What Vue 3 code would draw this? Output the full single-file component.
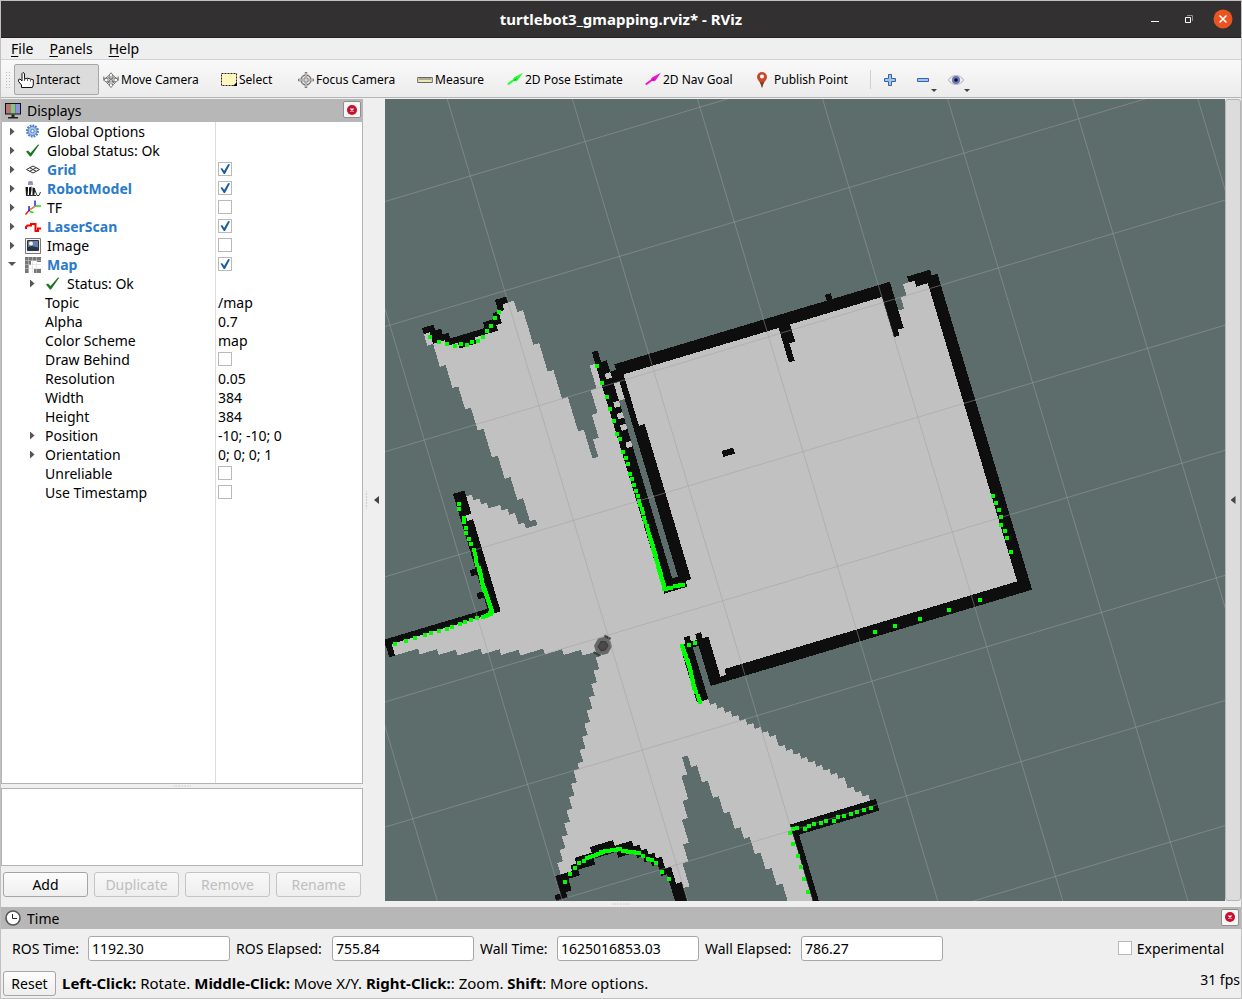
<template>
  <div class="window">
    <header class="titlebar">
      <h1 class="titlebar__title">turtlebot3_gmapping.rviz* - RViz</h1>
      <div class="titlebar__controls">
        <button class="titlebar__button" aria-label="Minimize">
          <svg width="20" height="20" viewBox="0 0 20 20"><path d="M6 12.5h8" stroke="#fff" /></svg>
        </button>
        <button class="titlebar__button" aria-label="Restore">
          <svg width="20" height="20" viewBox="0 0 20 20" fill="none">
            <path d="M8 6.5h5.500v5.500" stroke="#8f8e8e" />
            <path d="M6.500 8.500h5v5h-5z" stroke="#fff" />
          </svg>
        </button>
        <button class="titlebar__button" aria-label="Close">
          <svg width="20" height="20" viewBox="0 0 20 20">
            <circle cx="10" cy="10" r="9.500" fill="#e95420" />
            <path d="M6.500 6.500l7 7M13.500 6.500l-7 7" stroke="#fff" stroke-width="1.600" />
          </svg>
        </button>
      </div>
    </header>

    <nav class="menubar">
      <button v-for="menu in menus" :key="menu" class="menubar__item">
        <span class="menubar__key">{{ menu[0] }}</span>{{ menu.slice(1) }}
      </button>
    </nav>

    <div class="toolbar">
      <span class="toolbar__handle"></span>
      <button
        v-for="tool in tools"
        :key="tool.id"
        :class="['tool', { 'tool--active': tool.id === activeTool }]"
        :style="{ width: tool.width + 'px' }"
        @click="activeTool = tool.id"
      >
        <svg class="tool__icon" width="16" height="16" viewBox="0 0 16 16" fill="none">
          <template v-if="tool.id === 'interact'">
            <path d="M3.500 15.500V13L.6 9.500V7.500l1.400-.5 2 2V1.500l1-1 1.500 1V7l3-.8 3 .8 2.800.8v5.200l-1 2.500z" fill="#fff" stroke="#111" />
            <path d="M6.500 6v3M9.500 6.500V9M12.500 7.500v2" stroke="#333" stroke-width=".8" />
          </template>
          <template v-else-if="tool.id === 'move'">
            <path d="M8 .8l2.500 3H9v3.200h3V5.500L15.500 8 12 10.500V9H9v3.500h1.500L8 15.500l-2.500-3H7V9H4v1.500L.5 8 4 5.500V7h3V3.800H5.500z" fill="#fff" stroke="#555" stroke-width=".8" />
            <path d="M.8 4.500v3l4-3 6.500 6M15.200 4.500v3l-4-3-6.500 6M4 12l2-2M12 12l-2-2" stroke="#666" />
          </template>
          <template v-else-if="tool.id === 'select'">
            <path d="M.5 1.500h15v12H.5z" fill="#fff6bd" stroke="#222" stroke-dasharray="2 1" />
            <path d="M16 10v4h-4z" fill="#000" />
          </template>
          <template v-else-if="tool.id === 'focus'">
            <circle cx="8" cy="8" r="5" stroke="#777" stroke-width="1.300" />
            <circle cx="8" cy="8" r="2.500" stroke="#999" />
            <path d="M8 0v16M0 8h16" stroke="#777" stroke-width="2.400" />
            <path d="M8 1v14M1 8h14" stroke="#eee" />
          </template>
          <template v-else-if="tool.id === 'measure'">
            <path d="M.7 5.500h14.600v5H.7z" fill="#eee8b5" stroke="#666" />
            <path d="M3 6v2M5 6v2M7 6v2M9 6v2M11 6v2M13 6v2" stroke="#555" stroke-width=".8" />
          </template>
          <template v-else-if="tool.id === 'pose' || tool.id === 'goal'">
            <path d="M.8 12.500L8 7" :stroke="tool.color" stroke-width="2" />
            <path d="M16 .8L7 5.500l-1 1.500 3 2.500 1.500-1z" :fill="tool.color" />
            <path d="M7 8.800l2.500-2" stroke="#333" stroke-opacity=".6" />
          </template>
          <template v-else>
            <path d="M6 0a5 5 0 0 0-5 5c0 3.500 4 5 5 11 1-6 5-7.500 5-11a5 5 0 0 0-5-5z" fill="#c8492a" />
            <path d="M4 10l2 6 2-6z" fill="#6c4a20" />
            <circle cx="6" cy="4.500" r="2" fill="#fff" />
          </template>
        </svg>
        <span>{{ tool.label }}</span>
      </button>
      <span class="toolbar__separator"></span>
      <button class="tool-small" aria-label="Add tool">
        <svg width="16" height="16" viewBox="0 0 16 16">
          <path d="M6.500 2.500h3v4h4v3h-4v4h-3v-4h-4v-3h4z" fill="#a5c3e6" stroke="#2f65ac" />
        </svg>
      </button>
      <button class="tool-small" aria-label="Remove tool">
        <svg width="16" height="16" viewBox="0 0 16 16">
          <path d="M2.500 6.500h11v3h-11z" fill="#a5c3e6" stroke="#2f65ac" />
        </svg>
        <span class="tool-small__arrow"></span>
      </button>
      <button class="tool-small" aria-label="Tool visibility">
        <svg width="16" height="16" viewBox="0 0 16 16">
          <path d="M.3 8c3-6 12.400-6 15.400 0-3 6-12.400 6-15.400 0z" fill="#e8e8e8" stroke="#aaa" stroke-width=".8" />
          <circle cx="8" cy="8" r="4" fill="#6a78b5" />
          <circle cx="8" cy="8" r="1.800" fill="#0c0c30" />
        </svg>
        <span class="tool-small__arrow"></span>
      </button>
    </div>

    <main class="workspace">
      <aside class="displays">
        <div class="dock-title">
          <svg width="16" height="16" viewBox="0 0 16 16">
            <path d="M0 0h16v11.500H0z" fill="#111" />
            <path d="M1 1h5v9.500H1z" fill="#b87474" />
            <path d="M6 1h4.500v9.500H6z" fill="#80c880" />
            <path d="M10.500 1H15v9.500h-4.500z" fill="#9090e0" />
            <path d="M6.500 11.500h3v2.500h3.500v1.500H3V14h3.500z" fill="#222" />
          </svg>
          <h2 class="dock-title__label">Displays</h2>
          <button class="dock-title__close" aria-label="Close Displays">
            <svg width="10" height="10" viewBox="0 0 10 10">
              <circle cx="5" cy="5" r="5" fill="#c8102e" />
              <path d="M3.500 3.500l3 3M6.500 3.500l-3 3" stroke="#fff" stroke-width="1.200" />
            </svg>
          </button>
        </div>

        <div class="tree" role="tree">
          <div v-for="row in rows" :key="row.label" class="row" role="treeitem">
            <div :class="['row__name', { 'row__name--child': row.child }]">
              <span :class="['row__arrow', { 'row__arrow--closed': row.arrow === 'closed', 'row__arrow--open': row.arrow === 'open' }]"></span>
              <svg v-if="row.icon" class="row__icon" width="16" height="16" viewBox="0 0 16 16" fill="none">
                <template v-if="row.icon === 'gear'">
                  <circle cx="7.500" cy="7" r="5.500" stroke="#4a7fc0" stroke-width="2" stroke-dasharray="1.800 1" />
                  <circle cx="7.500" cy="7" r="4.500" fill="#a9c6ea" stroke="#4a7fc0" />
                  <circle cx="7.500" cy="7" r="1.700" fill="#fff" stroke="#4a7fc0" />
                </template>
                <template v-else-if="row.icon === 'ok'">
                  <path d="M1 8.500L3 7.500 5.500 10 13 1.500l1.200.2L6 13.500H5z" fill="#1d7420" />
                </template>
                <template v-else-if="row.icon === 'grid'">
                  <path d="M1.500 7.500L8 4l6.500 3.500L8 11zM4.700 5.700l6.500 3.600M11.300 5.700L4.700 9.300" stroke="#333" />
                </template>
                <template v-else-if="row.icon === 'robot'">
                  <path d="M3 1.500h5v2.500H3z" fill="#99a" />
                  <path d="M3.500 1h4" stroke="#3040b0" />
                  <path d="M.5 6H3v3l-.5 6H1zM4 6.500l2.500-1V9L5.500 15H4zM7.500 6.500L10 7v3l-1 5H7.500z" fill="#181818" />
                  <path d="M9.500 8l2.500 6.500h2l1.500-3.500M1 14.500h10" stroke="#333" />
                </template>
                <template v-else-if="row.icon === 'tf'">
                  <path d="M.5 14.500L4.500 10l6-4" stroke="#f01010" stroke-width="1.500" />
                  <path d="M4 11V6M10 6V.5" stroke="#2020f0" stroke-width="1.500" />
                  <path d="M4.500 11.500l4 1M10 6h6" stroke="#10e010" stroke-width="1.500" />
                  <path d="M5 10l5-4" stroke="#f0b020" />
                </template>
                <template v-else-if="row.icon === 'laser'">
                  <path d="M1 10V8l1.500-1.500H6V5h4.500v7H13V9.500h3" stroke="#f00" stroke-width="2" />
                </template>
                <template v-else-if="row.icon === 'image'">
                  <path d="M.5.500h15v15H.5z" fill="#f4f4f4" stroke="#777" />
                  <path d="M2.500 2.500h11v10h-11z" fill="#6480b0" stroke="#333" />
                  <path d="M3 9l4-1 6 1.500V12H3z" fill="#26334c" />
                  <circle cx="6" cy="5.500" r="2" fill="#fdf6c0" />
                </template>
                <template v-else>
                  <path d="M0 0h16v5h-4V4H6v4H4v8H0zM9 12h7v4H9z" fill="#777" />
                  <path d="M0 3.500h16M0 7.500h16M0 11.500h16M3.500 0v16M7.500 0v16M11.500 0v16" stroke="#d5d5d5" stroke-width=".5" />
                </template>
              </svg>
              <label v-if="'checked' in row" :for="'row-' + row.label" :class="['row__label', { 'row__label--enabled': row.icon && row.checked }]">{{ row.label }}</label>
              <span v-else class="row__label">{{ row.label }}</span>
            </div>
            <div class="row__value">
              <input v-if="'checked' in row" :id="'row-' + row.label" v-model="row.checked" class="checkbox" type="checkbox" />
              <span v-else>{{ row.value }}</span>
            </div>
          </div>
          <div class="row row--filler">
            <div></div>
            <div class="row__value"></div>
          </div>
        </div>

        <div class="grip grip--horizontal"></div>
        <div class="description"></div>

        <div class="displays__actions">
          <button class="button">Add</button>
          <button class="button" disabled>Duplicate</button>
          <button class="button" disabled>Remove</button>
          <button class="button" disabled>Rename</button>
        </div>
      </aside>

      <div class="splitter">
        <span class="grip grip--vertical"></span>
        <button class="collapse" aria-label="Hide left panel"></button>
      </div>

      <section class="view">
        <svg class="view__canvas" viewBox="385 99 840 802" preserveAspectRatio="xMidYMid slice">
          <g :transform="cellMatrix" shape-rendering="crispEdges">
            <path :d="freePath" fill="#c1c1c1" />
            <path :d="wallPath" fill="#0e0e0e" />
          </g>
          <!-- robot -->
          <g transform="translate(603 646) rotate(30)">
            <path d="M-4-11h7v3h-7zM-5 9h7v2h-7z" fill="#3c3c3c" />
            <path d="M-8-4l4-4h8l4 4v8l-4 4h-8l-4-4z" fill="#686868" />
            <path d="M-4-3l4-2 4 2v5l-3 3-5-2z" fill="#4a4a4a" stroke="#3a3a3a" />
          </g>
          <path :d="laserPath" fill="#00ff00" shape-rendering="crispEdges" />
          <path :d="gridPath" fill="none" stroke="#a0a0a4" stroke-opacity=".5" />
        </svg>
      </section>

      <button class="collapse collapse--right" aria-label="Hide right panel"></button>
    </main>

    <div class="grip grip--horizontal grip--bottom"></div>

    <section class="time">
      <div class="dock-title">
        <svg width="16" height="16" viewBox="0 0 16 16" fill="none">
          <circle cx="8" cy="8" r="7" fill="#fff" stroke="#555" stroke-width="1.600" />
          <path d="M7.500 4v4.500H12" stroke="#222" />
        </svg>
        <h2 class="dock-title__label">Time</h2>
        <button class="dock-title__close" aria-label="Close Time">
          <svg width="10" height="10" viewBox="0 0 10 10">
            <circle cx="5" cy="5" r="5" fill="#c8102e" />
            <path d="M3.500 3.500l3 3M6.500 3.500l-3 3" stroke="#fff" stroke-width="1.200" />
          </svg>
        </button>
      </div>
      <div class="time__fields">
        <div v-for="clock in clocks" :key="clock.id" class="field">
          <label :for="clock.id" :style="{ width: clock.width + 'px' }">{{ clock.label }}</label>
          <input :id="clock.id" class="field__input" type="text" :value="clock.value" readonly />
        </div>
        <div class="time__experimental">
          <input id="experimental" v-model="experimental" class="checkbox" type="checkbox" />
          <label for="experimental">Experimental</label>
        </div>
      </div>
    </section>

    <footer class="status">
      <button class="button button--reset">Reset</button>
      <p class="status__hint">
        <b>Left-Click:</b> Rotate. <b>Middle-Click:</b> Move X/Y. <b>Right-Click:</b>: Zoom. <b>Shift</b>: More options.
      </p>
      <span class="status__fps">31 fps</span>
    </footer>
  </div>
</template>

<script setup>
import { ref, reactive } from 'vue';

const menus = ['File', 'Panels', 'Help'];

const activeTool = ref('interact');
const tools = [
  { id: 'interact', label: 'Interact', width: 85 },
  { id: 'move', label: 'Move Camera', width: 118 },
  { id: 'select', label: 'Select', width: 77 },
  { id: 'focus', label: 'Focus Camera', width: 119 },
  { id: 'measure', label: 'Measure', width: 90 },
  { id: 'pose', label: '2D Pose Estimate', width: 138, color: '#1eff2e' },
  { id: 'goal', label: '2D Nav Goal', width: 111, color: '#f010d8' },
  { id: 'publish', label: 'Publish Point', width: 116 },
];

const rows = reactive([
  { label: 'Global Options', icon: 'gear', arrow: 'closed' },
  { label: 'Global Status: Ok', icon: 'ok', arrow: 'closed' },
  { label: 'Grid', icon: 'grid', arrow: 'closed', checked: true },
  { label: 'RobotModel', icon: 'robot', arrow: 'closed', checked: true },
  { label: 'TF', icon: 'tf', arrow: 'closed', checked: false },
  { label: 'LaserScan', icon: 'laser', arrow: 'closed', checked: true },
  { label: 'Image', icon: 'image', arrow: 'closed', checked: false },
  { label: 'Map', icon: 'map', arrow: 'open', checked: true },
  { label: 'Status: Ok', icon: 'ok', arrow: 'closed', child: true },
  { label: 'Topic', value: '/map', child: true },
  { label: 'Alpha', value: '0.7', child: true },
  { label: 'Color Scheme', value: 'map', child: true },
  { label: 'Draw Behind', checked: false, child: true },
  { label: 'Resolution', value: '0.05', child: true },
  { label: 'Width', value: '384', child: true },
  { label: 'Height', value: '384', child: true },
  { label: 'Position', value: '-10; -10; 0', arrow: 'closed', child: true },
  { label: 'Orientation', value: '0; 0; 0; 1', arrow: 'closed', child: true },
  { label: 'Unreliable', checked: false, child: true },
  { label: 'Use Timestamp', checked: false, child: true },
]);

const clocks = [
  { id: 'ros-time', label: 'ROS Time:', value: '1192.30', width: 76 },
  { id: 'ros-elapsed', label: 'ROS Elapsed:', value: '755.84', width: 96 },
  { id: 'wall-time', label: 'Wall Time:', value: '1625016853.03', width: 77 },
  { id: 'wall-elapsed', label: 'Wall Elapsed:', value: '786.27', width: 96 },
];
const experimental = ref(false);

// The occupancy grid is turned against the view: u and v are the axes of one
// 1 m square, 20 map cells wide, and origin is one of its corners.
const origin = [424.3, 440];
const u = [114.8, -34.4];
const v = [34.4, 114.8];
const CELLS = 20;

const cellMatrix = `matrix(${[...u, ...v].map((n) => n / CELLS).join(' ')} ${origin.join(' ')})`;

const toCell = ([x, y]) => {
  const dx = x - origin[0];
  const dy = y - origin[1];
  const scale = CELLS / (u[0] * u[0] + u[1] * u[1]);
  return [(dx * u[0] + dy * u[1]) * scale, (dx * v[0] + dy * v[1]) * scale];
};

const parse = (text) => text.trim().split(/\s+/).map((pair) => pair.split(',').map(Number));

const inside = (x, y, polygon) => {
  let hit = false;
  for (let i = 0, j = polygon.length - 1; i < polygon.length; j = i++) {
    const [xi, yi] = polygon[i];
    const [xj, yj] = polygon[j];
    if ((yi > y) !== (yj > y) && x < ((xj - xi) * (y - yi)) / (yj - yi) + xi) hit = !hit;
  }
  return hit;
};

// Rasterize the outlines to cells and join each row's cells into runs.
// Runs reach a little into the next row so that no seam shows between them.
const rasterize = (outlines, holes = []) => {
  const filled = outlines.map((text) => parse(text).map(toCell));
  const cut = holes.map((text) => parse(text).map(toCell));
  let d = '';
  for (let row = -70; row < 110; row++) {
    let start = null;
    for (let col = -50; col < 150; col++) {
      const cx = col + 0.5;
      const cy = row + 0.5;
      const on = filled.some((p) => inside(cx, cy, p)) && !cut.some((p) => inside(cx, cy, p));
      if (on && start === null) start = col;
      if (!on && start !== null) {
        d += `M${start} ${row}H${col}V${row + 1.05}H${start}z`;
        start = null;
      }
    }
  }
  return d;
};

const free = [
  // corridor, left arm and the two lower legs
  `424,333 437,334 453,341 470,340 490,331 498,322 502,308 508,302 513,302 517,312 522,312 533,344
   539,344 547,371 553,371 562,398 568,397 578,430 584,430 592,458 597,458 593,438 598,438 592,414
   597,413 591,390 595,387 590,365 596,364 602,370 611,372 672,580 690,582 706,640 690,648 704,699
   718,708 748,721 756,728 769,733 778,742 786,750 808,759 828,771 843,779 850,787 863,793 872,802
   872,806 795,832 818,910 791,910 783,883 776,883 772,868 765,868 761,853 754,853 748,837 742,837
   739,827 734,827 729,812 723,812 719,797 712,797 708,781 702,781 697,765 691,766 687,756 682,757
   686,775 682,777 688,797 682,800 687,817 682,819 688,843 683,844 687,861 683,863 689,885 683,887
   676,878 658,862 640,854 615,848 590,855 575,864 560,876 562,855 564,842 567,829 569,815 571,803
   573,789 575,776 579,769 582,756 584,742 586,730 588,716 591,703 593,687 595,677 598,663 602,652
   392,652 390,645 494,612 462,496 467,495 473,499 495,507 511,515 527,527 537,524 535,520 529,521
   523,498 517,499 510,478 504,478 498,457 492,457 484,430 477,429 471,408 465,408 458,387 452,387
   446,366 439,366 434,344 427,344`,
  // room
  `610,372 888,285 898,328 898,310 903,309 901,297 906,296 903,284 915,281 930,283 1020,584 713,680
   702,640 690,600 688,580 672,580`,
];

const unknown = [
  '619,400 625,399 678,577 672,578',
  '693,647 698,646 712,692 706,697',
];

const walls = [
  `422,328 433,326 435,330 441,330 448,334 450,337 483,330 483,323 493,321 493,313 498,312 495,301
   506,297 508,304 503,305 503,310 500,312 502,322 497,330 485,334 475,342 450,347 441,341 433,341
   428,333 424,333`,
  '592,352 597,351 601,362 606,361 613,385 672,578 662,584',
  '606,376 622,371 625,378 608,383',
  '619,372 625,370 640,427 645,425 690,578 678,577',
  '658,577 690,577 686,586 665,591',
  '614,364 890,282 893,293 618,376',
  '825,296 831,293 833,301 826,303',
  '779,328 790,324 795,341 789,343 794,361 788,362',
  '880,290 890,282 903,328 898,329 899,336 894,337',
  '907,277 930,271 932,276 938,274 1031,589 1019,589 928,284 916,287 914,281 909,283',
  '1031,589 1028,578 725,668 726,675 720,677 708,637 702,639 701,633 695,634 699,646 710,685',
  '684,637 689,636 691,641 697,640 698,646 693,648 707,698 697,702 681,646 685,644',
  `453,494 465,491 471,513 467,515 469,521 473,519 500,611 493,616 394,644 395,655 389,656 386,645
   370,650 370,643 489,608`,
  '470,570 477,568 480,576 472,577',
  '477,594 483,592 486,598 479,599',
  '790,825 876,799 879,810 799,834 822,915 816,917 792,834',
  `555,896 560,894 556,876 567,873 576,857 590,854 591,847 613,841 614,846 632,842 633,846 639,846
   647,851 657,855 662,858 664,867 671,868 674,882 681,882 690,915 682,915 667,877 657,868 645,862
   635,855 618,856 615,852 593,857 594,863 578,868 578,875 568,877 571,890 565,890 567,897 557,900`,
  '722,451 733,448 734,453 724,457',
];

const wallGaps = [
  '604,374 610,372 611,377 605,379',
  '613,402 619,400 621,406 615,408',
  '616,413 622,411 624,417 618,419',
  '620,425 626,423 628,429 622,431',
  '626,442 632,440 634,446 628,448',
];

const freePath = rasterize([...free, ...wallGaps], unknown);
const wallPath = rasterize(walls, wallGaps);

const hits = parse(`
  430,337 439,342 447,344 455,346 461,344 467,345 472,342 478,341 483,337 487,331 491,326 495,318 499,312
  597,366 602,383 607,397 610,409 614,421 617,434 620,439 623,452 626,458 628,464 630,474 632,479 634,485
  636,491 638,496 459,504 459,509 464,518 464,522 466,528 466,533 469,539 471,544
  491,614 483,617 477,618 471,620 465,622 460,624 452,627 447,629 439,631 431,633 425,635 415,638 406,641 395,644
  565,882 570,874 575,868 579,863 584,861 587,858 643,856 648,859 652,860 656,863 662,872 669,879
  689,645 695,643 993,496 996,503 999,510 1001,517 1001,525 1005,531 1007,538 1011,552
  875,632 895,626 920,619 949,610 980,600
  790,833 793,829 797,828 805,829 809,826 814,824 821,823 826,821 834,821 838,817 844,816 851,814 857,812
  864,810 871,808 793,844 798,856 801,867 804,879 808,892`);

// stretches where the hits run into each other: x1, y1, x2, y2, count
const sweeps = [
  [639, 501, 649, 534, 9], [650, 537, 664, 586, 34], [664, 589, 671, 588, 4], [675, 586, 683, 585, 4],
  [474, 550, 477, 565, 5], [479, 568, 484, 590, 14], [485, 590, 492, 612, 16], [492, 612, 486, 616, 4],
  [590, 857, 601, 853, 5], [601, 852, 620, 849, 10], [623, 851, 639, 853, 7],
  [682, 646, 690, 668, 14], [690, 668, 694, 688, 10], [695, 689, 700, 702, 5],
];
sweeps.forEach(([x1, y1, x2, y2, count]) => {
  for (let i = 0; i < count; i++) {
    const t = i / (count - 1);
    hits.push([Math.round(x1 + (x2 - x1) * t), Math.round(y1 + (y2 - y1) * t)]);
  }
});
const laserPath = hits.map(([x, y]) => `M${x - 2} ${y - 2}h4v4h-4z`).join('');

const at = (i, j) => [origin[0] + i * u[0] + j * v[0], origin[1] + i * u[1] + j * v[1]].join(' ');
let gridPath = '';
for (let i = -10; i <= 10; i++) {
  gridPath += `M${at(i, -12)}L${at(i, 12)}M${at(-12, i)}L${at(12, i)}`;
}
</script>

<style>
body {
  margin: 0;
  background: #efefef;
}
</style>

<style scoped>
.window {
  display: flex;
  flex-direction: column;
  box-sizing: border-box;
  height: 100vh;
  border: 1px solid #c0c0c0;
  background: #efefef;
  color: #000;
  font-family: "Noto Sans", "Open Sans", sans-serif;
  font-size: 14px;
  line-height: 19px;
}

button,
input {
  font: inherit;
  color: inherit;
}

.titlebar {
  display: grid;
  grid-template-columns: 1fr auto 1fr;
  align-items: center;
  height: 36px;
  background: #323030;
  border-bottom: 1px solid #222;
  color: #fff;
}

.titlebar__title {
  grid-column: 2;
  margin: 0;
  font-size: 15px;
  font-weight: 700;
}

.titlebar__controls {
  display: flex;
  justify-content: flex-end;
  gap: 14px;
  padding-right: 8px;
}

.titlebar__button {
  display: flex;
  padding: 0;
  border: 0;
  background: none;
}

.menubar {
  display: flex;
  align-items: center;
  gap: 16px;
  height: 21px;
  padding-left: 10px;
  border-bottom: 1px solid #d2d2d2;
}

.menubar__item {
  padding: 0;
  border: 0;
  background: none;
}

.menubar__key {
  text-decoration: underline;
  text-underline-offset: 2px;
}

.toolbar {
  display: flex;
  align-items: center;
  height: 35px;
  padding: 2px 0 0 4px;
  border-bottom: 1px solid #b4b4b4;
  background: linear-gradient(#f9f9f9, #ececec);
  font-size: 12px;
}

.toolbar__handle {
  width: 5px;
  height: 18px;
  margin-right: 4px;
  background: radial-gradient(circle, #bbb 1px, transparent 1px) 0 0 / 3px 3px;
}

.tool {
  display: flex;
  align-items: center;
  flex: none;
  gap: 2px;
  box-sizing: border-box;
  height: 31px;
  padding: 0 0 0 3px;
  border: 1px solid transparent;
  border-radius: 2px;
  background: none;
  white-space: nowrap;
}

.tool--active {
  border-color: #a8a8a8;
  background: #dcdcdc;
}

.tool__icon {
  flex: none;
}

.toolbar__separator {
  width: 1px;
  height: 19px;
  margin: 0 11px 0 2px;
  background: #d0d0d0;
}

.tool-small {
  position: relative;
  display: flex;
  margin-right: 17px;
  padding: 0;
  border: 0;
  background: none;
}

.tool-small__arrow {
  position: absolute;
  right: -6px;
  bottom: -4px;
  border: 3px solid transparent;
  border-top-color: #444;
  border-bottom: 0;
}

.workspace {
  display: flex;
  flex: 1;
  min-height: 0;
  padding-top: 1px;
}

.displays {
  display: flex;
  flex-direction: column;
  flex: none;
  width: 362px;
}

.dock-title {
  display: flex;
  align-items: center;
  gap: 6px;
  height: 23px;
  padding: 0 2px 0 4px;
  background: #b7b7b7;
}

.dock-title__label {
  flex: 1;
  margin: 0;
  font-size: 14px;
  font-weight: 400;
}

.dock-title__close {
  display: flex;
  align-items: center;
  justify-content: center;
  width: 18px;
  height: 17px;
  padding: 0;
  margin-bottom: 2px;
  border: 1px solid #8e8e8e;
  border-radius: 2px;
  background: #f6f6f6;
}

.tree {
  display: flex;
  flex-direction: column;
  flex: 1;
  border: 1px solid #b4b4b4;
  border-top: 0;
  background: #fff;
}

.row {
  display: grid;
  grid-template-columns: 213px 1fr;
  height: 19px;
}

.row--filler {
  flex: 1;
}

.row__name {
  display: flex;
  align-items: center;
  padding-left: 5px;
}

.row__name--child {
  padding-left: 25px;
}

.row__arrow {
  flex: none;
  width: 10px;
  height: 8px;
  margin-right: 8px;
}

.row__arrow--closed {
  background: #555;
  clip-path: polygon(30% 0, 75% 50%, 30% 100%);
}

.row__arrow--open {
  background: #555;
  clip-path: polygon(10% 20%, 90% 20%, 50% 70%);
}

.row__icon {
  flex: none;
  margin-right: 6px;
}

.row__label--enabled {
  color: #2a7bc8;
  font-weight: 700;
}

.row__value {
  display: flex;
  align-items: center;
  padding-left: 2px;
  border-left: 1px solid #dcdcdc;
}

.checkbox {
  appearance: none;
  box-sizing: border-box;
  width: 14px;
  height: 14px;
  margin: 0 0 1px;
  border: 1px solid #b9b9b9;
  background: #fff;
}

.checkbox:checked::after {
  content: "";
  display: block;
  width: 10px;
  height: 10px;
  margin: 1px;
  background: #1a5da0;
  clip-path: polygon(5% 48%, 20% 40%, 42% 68%, 82% 0, 100% 5%, 50% 100%, 38% 100%);
}

.grip {
  flex: none;
  background: radial-gradient(circle, #aaa 1px, transparent 1px) center / 3px 3px no-repeat;
}

.grip--horizontal {
  width: 18px;
  height: 2px;
  margin: 1px auto;
  background-repeat: repeat-x;
}

.grip--vertical {
  width: 3px;
  height: 18px;
  margin-left: 2px;
  background-repeat: repeat-y;
}

.grip--bottom {
  margin: 2px auto;
}

.description {
  height: 76px;
  border: 1px solid #b4b4b4;
  background: #fff;
}

.displays__actions {
  display: grid;
  grid-template-columns: repeat(4, 1fr);
  gap: 6px;
  padding: 6px 2px 4px;
}

.button {
  box-sizing: border-box;
  height: 25px;
  padding: 0 6px;
  border: 1px solid #a5a5a5;
  border-radius: 3px;
  background: linear-gradient(#fdfdfd, #eee);
}

.button:disabled {
  border-color: #c4c4c4;
  background: linear-gradient(#f8f8f8, #eee);
  color: #bebebe;
}

.splitter {
  display: flex;
  align-items: center;
  flex: none;
  width: 22px;
}

.collapse {
  flex: 1;
  align-self: stretch;
  padding: 0;
  border: 0;
  background: none;
}

.collapse::before {
  content: "";
  display: block;
  width: 5px;
  height: 8px;
  margin: 0 auto;
  background: #444;
  clip-path: polygon(100% 0, 0 50%, 100% 100%);
}

.collapse--right {
  flex: none;
  width: 16px;
  border: 1px solid #b4b4b4;
  border-radius: 3px;
  background: #dcdcdc;
}

.view {
  position: relative;
  flex: 1;
  min-width: 0;
  overflow: hidden;
  background: #5d6d6b;
}

.view__canvas {
  position: absolute;
  inset: 0;
  width: 100%;
  height: 100%;
}

.time .dock-title {
  height: 22px;
}

.time__fields {
  display: flex;
  align-items: center;
  gap: 6px;
  height: 39px;
  padding: 0 17px 0 11px;
}

.field {
  display: flex;
  align-items: center;
  white-space: nowrap;
}

.field__input {
  box-sizing: border-box;
  width: 142px;
  height: 25px;
  padding: 0 3px;
  border: 1px solid #a8a8a8;
  border-radius: 3px;
  background: #fff;
}

.time__experimental {
  display: flex;
  align-items: center;
  gap: 5px;
  margin-left: auto;
}

.status {
  display: flex;
  align-items: center;
  height: 30px;
  padding: 0 1px 0 2px;
}

.button--reset {
  width: 53px;
}

.status__hint {
  margin: 0 auto 0 6px;
  font-size: 15px;
}

.status__fps {
  align-self: flex-start;
  padding-top: 2px;
}
</style>
